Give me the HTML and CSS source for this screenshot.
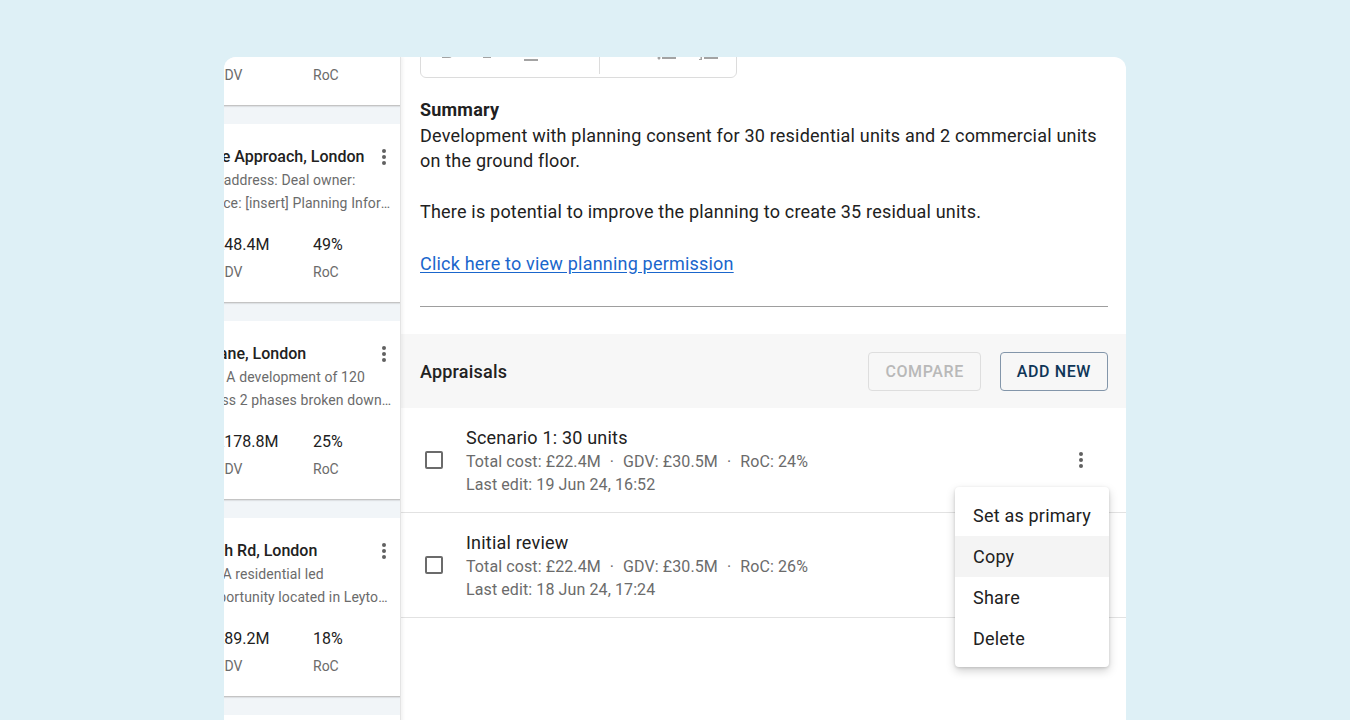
FILE: index.html
```html
<!DOCTYPE html>
<html lang="en">
<head>
<meta charset="utf-8">
<title>Deal – Appraisals</title>
<link rel="stylesheet" href="styles.css">
</head>
<body>
<main class="frame">
  <aside class="deal-list">
    <div class="deal-track">
      <article class="deal-card">
        <div class="deal-head"><h3 class="deal-title">Greenway Court, London</h3><button class="kebab kebab-sm" aria-label="More"><i></i><i></i><i></i></button></div>
        <p class="deal-desc"><span class="desc-line">Description: Mixed use scheme comprising</span><span class="desc-line">40 units with ground floor retail and parking</span></p>
        <div class="deal-stats"><span class="stat-val">£12.1M</span><span class="stat-val">£15.6M</span><span class="stat-val">22%</span><span class="stat-lbl">Total cost</span><span class="stat-lbl">GDV</span><span class="stat-lbl">RoC</span></div>
      </article>
      <article class="deal-card">
        <div class="deal-head"><h3 class="deal-title">1-3 Kingsbridge Approach, London</h3><button class="kebab kebab-sm" aria-label="More"><i></i><i></i><i></i></button></div>
        <p class="deal-desc"><span class="desc-line">Description: Site address: Deal owner:</span><span class="desc-line">[name] Deal source: [insert] Planning Information: [insert]</span></p>
        <div class="deal-stats"><span class="stat-val">£32.6M</span><span class="stat-val">£48.4M</span><span class="stat-val">49%</span><span class="stat-lbl">Total cost</span><span class="stat-lbl">GDV</span><span class="stat-lbl">RoC</span></div>
      </article>
      <article class="deal-card">
        <div class="deal-head"><h3 class="deal-title">Old Meadow Lane, London</h3><button class="kebab kebab-sm" aria-label="More"><i></i><i></i><i></i></button></div>
        <p class="deal-desc"><span class="desc-line">Deal description: A development of 120</span><span class="desc-line">apartments across 2 phases broken down into private and affordable</span></p>
        <div class="deal-stats"><span class="stat-val">£143.1M</span><span class="stat-val">£178.8M</span><span class="stat-val">25%</span><span class="stat-lbl">Total cost</span><span class="stat-lbl">GDV</span><span class="stat-lbl">RoC</span></div>
      </article>
      <article class="deal-card">
        <div class="deal-head"><h3 class="deal-title">1 Leyton Church Rd, London</h3><button class="kebab kebab-sm" aria-label="More"><i></i><i></i><i></i></button></div>
        <p class="deal-desc"><span class="desc-line">Site description: A residential led</span><span class="desc-line">development opportunity located in Leytonstone, east London</span></p>
        <div class="deal-stats"><span class="stat-val">£75.6M</span><span class="stat-val">£89.2M</span><span class="stat-val">18%</span><span class="stat-lbl">Total cost</span><span class="stat-lbl">GDV</span><span class="stat-lbl">RoC</span></div>
      </article>
      <article class="deal-card">
        <div class="deal-head"><h3 class="deal-title">Ruckholt Road, London</h3><button class="kebab kebab-sm" aria-label="More"><i></i><i></i><i></i></button></div>
        <p class="deal-desc"><span class="desc-line">Description: Light industrial site with</span><span class="desc-line">potential for residential conversion</span></p>
        <div class="deal-stats"><span class="stat-val">£20.4M</span><span class="stat-val">£26.0M</span><span class="stat-val">27%</span><span class="stat-lbl">Total cost</span><span class="stat-lbl">GDV</span><span class="stat-lbl">RoC</span></div>
      </article>
    </div>
  </aside>

  <section class="deal-detail">
    <div class="detail-body">
      <div class="editor-toolbar">
        <button class="tool" aria-label="Bold"><svg viewBox="0 0 24 24"><path d="M15.6 10.79c.97-.67 1.65-1.77 1.65-2.790 0-2.26-1.75-4-4-4H7v14h7.04c2.09 0 3.71-1.7 3.71-3.79 0-1.52-.86-2.82-2.150-3.42zM10 6.5h3c.83 0 1.5.67 1.5 1.5s-.67 1.5-1.5 1.5h-3v-3zm3.5 9H10v-3h3.5c.83 0 1.5.67 1.5 1.5s-.67 1.5-1.5 1.5z"/></svg></button>
        <button class="tool" aria-label="Italic"><svg viewBox="0 0 24 24"><path d="M10 4v3h2.21l-3.42 8H6v3h8v-3h-2.21l3.42-8H18V4z"/></svg></button>
        <button class="tool" aria-label="Underline"><svg viewBox="0 0 24 24"><path d="M12 17c3.31 0 6-2.69 6-6V3h-2.5v8c0 1.93-1.57 3.5-3.5 3.5S8.5 12.93 8.5 11V3H6v8c0 3.310 2.69 6 6 6zm-7 2v2h14v-2H5z"/></svg></button>
        <button class="tool" aria-label="Link"><svg viewBox="0 0 24 24"><path d="M3.9 12c0-1.71 1.39-3.1 3.1-3.1h4V7H7c-2.76 0-5 2.24-5 5s2.24 5 5 5h4v-1.9H7c-1.71 0-3.1-1.39-3.1-3.1zM8 13h8v-2H8v2zm9-6h-4v1.9h4c1.71 0 3.1 1.39 3.1 3.1s-1.39 3.1-3.1 3.1h-4V17h4c2.76 0 5-2.24 5-5s-2.24-5-5-5z" transform="translate(0 -2)"/></svg></button>
        <span class="tool-divider"></span>
        <button class="tool" aria-label="Quote"><svg viewBox="0 0 24 24"><path d="M6 17h3l2-4V7H5v6h3zm8 0h3l2-4V7h-6v6h3z"/></svg></button>
        <button class="tool" aria-label="Bulleted list"><svg viewBox="0 0 24 24"><path d="M4 10.5c-.83 0-1.5.67-1.5 1.5s.67 1.5 1.5 1.5 1.5-.67 1.5-1.5-.67-1.5-1.5-1.5zm0-6c-.83 0-1.5.67-1.5 1.5S3.17 7.5 4 7.5 5.5 6.83 5.5 6 4.83 4.5 4 4.5zm0 12c-.83 0-1.5.68-1.5 1.5s.68 1.5 1.5 1.5 1.5-.68 1.5-1.5-.67-1.5-1.5-1.5zM7 19h14v-2H7v2zm0-6h14v-2H7v2zm0-8v2h14V5H7z"/></svg></button>
        <button class="tool" aria-label="Numbered list"><svg viewBox="0 0 24 24"><path d="M2 17h2v.5H3v1h1v.5H2v1h3v-4H2v1zm1-9h1V4H2v1h1v3zm-1 3h1.8L2 13.1v.9h3v-1H3.2L5 10.9V10H2v1zm5-6v2h14V5H7zm0 14h14v-2H7v2zm0-6h14v-2H7v2z"/></svg></button>
      </div>

      <div class="summary">
        <h2 class="summary-title">Summary</h2>
        <p>Development with planning consent for 30 residential units and 2 commercial units on the ground floor.</p>
        <p>There is potential to improve the planning to create 35 residual units.</p>
        <p><a href="#" class="summary-link">Click here to view planning permission</a></p>
      </div>
      <hr class="rule">
    </div>

    <div class="appraisals">
      <header class="appraisals-head">
        <h2 class="appraisals-title">Appraisals</h2>
        <div class="appraisals-actions">
          <button class="btn btn-disabled" disabled>Compare</button>
          <button class="btn btn-outline">Add new</button>
        </div>
      </header>
      <ul class="appraisal-list">
        <li class="appraisal">
          <span class="checkbox"></span>
          <div class="appraisal-text">
            <div class="appraisal-name">Scenario 1: 30 units</div>
            <div class="appraisal-meta">Total cost: £22.4M<span class="sep">·</span>GDV: £30.5M<span class="sep">·</span>RoC: 24%</div>
            <div class="appraisal-meta">Last edit: 19 Jun 24, 16:52</div>
          </div>
          <button class="kebab" aria-label="More"><i></i><i></i><i></i></button>
        </li>
        <li class="appraisal">
          <span class="checkbox"></span>
          <div class="appraisal-text">
            <div class="appraisal-name">Initial review</div>
            <div class="appraisal-meta">Total cost: £22.4M<span class="sep">·</span>GDV: £30.5M<span class="sep">·</span>RoC: 26%</div>
            <div class="appraisal-meta">Last edit: 18 Jun 24, 17:24</div>
          </div>
          <button class="kebab" aria-label="More"><i></i><i></i><i></i></button>
        </li>
      </ul>
    </div>
  </section>

  <ul class="menu" role="menu">
    <li class="menu-item">Set as primary</li>
    <li class="menu-item is-hover">Copy</li>
    <li class="menu-item">Share</li>
    <li class="menu-item">Delete</li>
  </ul>
</main>
</body>
</html>
```

FILE: styles.css
```css
* { box-sizing: border-box; }

html, body {
  margin: 0;
  height: 720px;
  overflow: hidden;
}

body {
  background: #def0f6;
  font-family: Roboto, "Noto Sans", "Liberation Sans", sans-serif;
  color: #212121;
}

button {
  font-family: inherit;
  background: none;
  border: 0;
  padding: 0;
  cursor: pointer;
}

.frame {
  position: relative;
  display: flex;
  width: 902px;
  height: 700px;
  margin: 57px 0 0 224px;
  background: #fff;
  border-radius: 12px 12px 0 0;
  overflow: hidden;
}

/* ---------- left deal list ---------- */
.deal-list {
  flex: none;
  width: 177px;
  overflow: hidden;
  background: #f1f5f8;
  border-right: 1px solid #e4e4e4;
  box-shadow: 2px 0 3px rgba(0, 0, 0, 0.05);
  position: relative;
  z-index: 1;
}

.deal-track {
  width: 300px;
  margin-left: -123px;
  margin-top: -130px;
}

.deal-card {
  background: #fff;
  padding: 22px 7px 20px 16px;
  border-bottom: 1px solid #c4c4c4;
  box-shadow: 0 1px 1px rgba(0, 0, 0, 0.08);
  margin-bottom: 18px;
}

.deal-head {
  display: flex;
  align-items: center;
  height: 22px;
}

.deal-title {
  flex: 1;
  margin: 0;
  font-size: 16px;
  font-weight: 500;
  line-height: 22px;
  white-space: nowrap;
  overflow: hidden;
}

.deal-desc {
  margin: 1px 0 0;
  font-size: 14px;
  line-height: 23px;
  color: #6b6b6b;
  letter-spacing: 0.1px;
}

.desc-line {
  display: block;
  white-space: nowrap;
  overflow: hidden;
  text-overflow: ellipsis;
}

.deal-stats {
  display: grid;
  grid-template-columns: 98px 98px 1fr;
  margin-top: 18px;
}

.stat-val {
  font-size: 16px;
  line-height: 24px;
}

.stat-lbl {
  font-size: 14px;
  line-height: 20px;
  margin-top: 5px;
  color: #6b6b6b;
}

/* kebab */
.kebab {
  display: flex;
  flex-direction: column;
  align-items: center;
  justify-content: center;
  gap: 2px;
  width: 20px;
  height: 24px;
}

.kebab i {
  display: block;
  width: 4px;
  height: 4px;
  border-radius: 50%;
  background: #616161;
}

.kebab-sm {
  flex: none;
}

/* ---------- right detail ---------- */
.deal-detail {
  flex: 1;
  min-width: 0;
  display: flex;
  flex-direction: column;
}

.detail-body {
  padding: 0 18px 0 19px;
}

.editor-toolbar {
  display: flex;
  align-items: center;
  width: 317px;
  height: 52px;
  margin-top: -31px;
  padding-left: 5px;
  border: 1px solid #dcdcdc;
  border-radius: 6px;
}

.tool {
  display: flex;
  align-items: center;
  justify-content: center;
  width: 42px;
  height: 40px;
}

.tool svg {
  width: 24px;
  height: 24px;
  fill: #a3a3a3;
}

.tool-divider {
  width: 1px;
  height: 44px;
  margin: 0 4px 0 5px;
  background: #dcdcdc;
}

.summary {
  margin-top: 19px;
  font-size: 18px;
  line-height: 25.6px;
  letter-spacing: 0.2px;
}

.summary-title {
  margin: 0;
  font-size: 18px;
  font-weight: 700;
  line-height: 25.6px;
}

.summary p {
  margin: 0;
}

.summary p + p {
  margin-top: 25.6px;
}

.summary-link {
  color: #1a66cc;
  text-decoration: underline;
  text-underline-offset: 2px;
}

.rule {
  margin: 30px 0 0;
  border: 0;
  height: 1px;
  background: #9e9e9e;
}

/* ---------- appraisals ---------- */
.appraisals {
  margin-top: 27px;
}

.appraisals-head {
  display: flex;
  align-items: center;
  justify-content: space-between;
  height: 74px;
  padding: 0 18px 0 19px;
  background: #f7f7f7;
}

.appraisals-title {
  margin: 0;
  font-size: 18px;
  font-weight: 500;
  letter-spacing: 0.2px;
  color: #222;
}

.appraisals-actions {
  display: flex;
  gap: 19px;
}

.btn {
  height: 39px;
  padding: 0 16px;
  border-radius: 4px;
  font-size: 16px;
  font-weight: 500;
  letter-spacing: 0.6px;
  text-transform: uppercase;
}

.btn-disabled {
  border: 1px solid #dedede;
  color: #b9b9b9;
  min-width: 111px;
  cursor: default;
}

.btn-outline {
  border: 1px solid #8396aa;
  color: #0f3657;
  min-width: 108px;
}

.appraisal-list {
  list-style: none;
  margin: 0;
  padding: 0;
}

.appraisal {
  display: flex;
  align-items: center;
  height: 105px;
  padding: 0 35px 0 24px;
  border-bottom: 1px solid #e2e2e2;
}

.checkbox {
  flex: none;
  width: 18px;
  height: 18px;
  border: 2px solid #6b6b6b;
  border-radius: 2px;
  margin-right: 23px;
}

.appraisal-text {
  flex: 1;
  padding-top: 2px;
}

.appraisal-name {
  font-size: 18px;
  line-height: 24px;
  letter-spacing: 0.2px;
}

.appraisal-meta {
  font-size: 16px;
  line-height: 23px;
  letter-spacing: 0.1px;
  color: #6b6b6b;
}

.sep {
  margin: 0 9px;
}

/* ---------- context menu ---------- */
.menu {
  position: absolute;
  left: 731px;
  top: 430px;
  width: 154px;
  margin: 0;
  padding: 8px 0;
  list-style: none;
  background: #fff;
  border-radius: 4px;
  box-shadow: 0 4px 10px rgba(0, 0, 0, 0.18), 0 1px 3px rgba(0, 0, 0, 0.14);
  z-index: 5;
}

.menu-item {
  height: 41px;
  line-height: 41px;
  padding: 0 18px;
  font-size: 18px;
  letter-spacing: 0.2px;
  color: #212121;
  white-space: nowrap;
}

.menu-item.is-hover {
  background: #f4f4f4;
}
```
